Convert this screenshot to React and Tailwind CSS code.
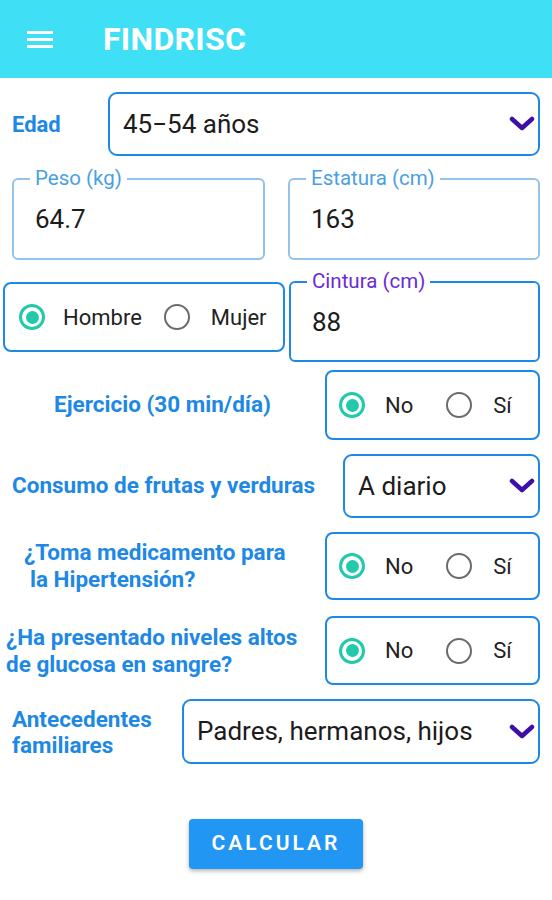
import React from 'react'

const Chevron = () => (
    <svg width="26" height="16" viewBox="0 0 26 16" className="shrink-0">
        <polyline points="3,3 13,12 23,3" fill="none" stroke="#3d0fa8" strokeWidth="4.5" strokeLinecap="round" strokeLinejoin="round" />
    </svg>
)

const Radio = ({ checked }) => (
    checked ? (
        <span className="w-[26px] h-[26px] rounded-full border-[3px] border-[#22c9aa] flex items-center justify-center shrink-0">
            <span className="w-[13px] h-[13px] rounded-full bg-[#22c9aa]"></span>
        </span>
    ) : (
        <span className="block w-[26px] h-[26px] rounded-full border-2 border-[#6b6b6b] shrink-0"></span>
    )
)

const Select = ({ value, className }) => (
    <div className={`border-2 border-[#1e88e5] rounded-[9px] flex items-center justify-between pl-[13px] pr-[3px] bg-white ${className}`}>
        <span className="text-[26px] text-[#1c1c1c]">{value}</span>
        <Chevron />
    </div>
)

const Field = ({ label, value, focused, className }) => (
    <div className={`relative rounded-[6px] border-2 ${focused ? 'border-[#1e88e5]' : 'border-[#93c3ea]'} pl-[21px] pt-[20px] ${className}`}>
        <span className={`absolute -top-[14px] left-[16px] px-[5px] bg-white text-[20.5px] leading-[25px] ${focused ? 'text-[#6a2bd8]' : 'text-[#4a9fe4]'}`}>{label}</span>
        <span className="text-[26px] text-[#1c1c1c]">{value}</span>
    </div>
)

const YesNo = ({ className }) => (
    <div className={`border-2 border-[#1e88e5] rounded-[8px] flex items-center pl-[12px] ${className}`}>
        <Radio checked />
        <span className="ml-[20px] text-[22px] text-[#222]">No</span>
        <span className="ml-[33px]"><Radio /></span>
        <span className="ml-[21px] text-[22px] text-[#222]">Sí</span>
    </div>
)

export default function App() {
    return (
        <div className="w-[552px] h-[900px] bg-white flex flex-col" style={{ fontFamily: 'Roboto, "Liberation Sans", sans-serif' }}>
            {/* Top bar */}
            <div className="h-[78px] bg-[#3fdff5] flex items-center shrink-0">
                <div className="ml-[27px] flex flex-col gap-[4px] w-[26px]">
                    <span className="h-[3px] bg-white"></span>
                    <span className="h-[3px] bg-white"></span>
                    <span className="h-[3px] bg-white"></span>
                </div>
                <h1 className="ml-[50px] text-white font-bold text-[32px] tracking-[0.3px]">FINDRISC</h1>
            </div>

            {/* Edad */}
            <div className="flex items-center mt-[14px] px-3">
                <span className="w-[96px] text-[22px] font-bold text-[#1e88e5]">Edad</span>
                <Select value="45−54 años" className="flex-1 h-[64px]" />
            </div>

            {/* Peso / Estatura */}
            <div className="flex mt-[22px] px-3 gap-[23px]">
                <Field label="Peso (kg)" value="64.7" className="w-[253px] h-[82px]" />
                <Field label="Estatura (cm)" value="163" className="w-[252px] h-[82px]" />
            </div>

            {/* Sexo / Cintura */}
            <div className="flex items-start mt-[21px] pl-[3px] pr-3 gap-[4px]">
                <div className="w-[282px] h-[70px] border-2 border-[#1e88e5] rounded-[8px] flex items-center pl-[14px] mt-[1px]">
                    <Radio checked />
                    <span className="ml-[18px] text-[22px] text-[#222]">Hombre</span>
                    <span className="ml-[22px]"><Radio /></span>
                    <span className="ml-[21px] text-[22px] text-[#222]">Mujer</span>
                </div>
                <Field label="Cintura (cm)" value="88" focused className="flex-1 h-[81px]" />
            </div>

            {/* Ejercicio */}
            <div className="flex items-center mt-[8px] pr-3">
                <span className="flex-1 text-center text-[22.5px] font-bold text-[#1e88e5]">Ejercicio (30 min/día)</span>
                <YesNo className="w-[215px] h-[70px]" />
            </div>

            {/* Frutas */}
            <div className="flex items-center mt-[14px] pl-3 pr-3">
                <span className="flex-1 text-[22.5px] font-bold text-[#1e88e5]">Consumo de frutas y verduras</span>
                <Select value="A diario" className="w-[197px] h-[64px]" />
            </div>

            {/* Hipertension */}
            <div className="flex items-center mt-[14px] pr-3">
                <div className="flex-1 pl-[24px] text-[22.5px] leading-[27px] font-bold text-[#1e88e5]">
                    <div>¿Toma medicamento para</div>
                    <div className="pl-[6px]">la Hipertensión?</div>
                </div>
                <YesNo className="w-[215px] h-[68px]" />
            </div>

            {/* Glucosa */}
            <div className="flex items-center mt-[16px] pr-3">
                <div className="flex-1 pl-[6px] text-[22.5px] leading-[27px] font-bold text-[#1e88e5]">
                    <div>¿Ha presentado niveles altos</div>
                    <div>de glucosa en sangre?</div>
                </div>
                <YesNo className="w-[215px] h-[69px]" />
            </div>

            {/* Antecedentes */}
            <div className="flex items-center mt-[14px] pl-3 pr-3">
                <div className="flex-1 text-[22.5px] leading-[26px] font-bold text-[#1e88e5]">
                    <div>Antecedentes</div>
                    <div>familiares</div>
                </div>
                <Select value="Padres, hermanos, hijos" className="w-[358px] h-[65px]" />
            </div>

            {/* Button */}
            <div className="flex justify-center mt-[55px]">
                <button className="w-[174px] h-[50px] bg-[#2196f3] rounded-[4px] shadow-[0_2px_4px_rgba(0,0,0,0.3)] text-white text-[21px] font-semibold tracking-[3px]">
                    CALCULAR
                </button>
            </div>
        </div>
    )
}
